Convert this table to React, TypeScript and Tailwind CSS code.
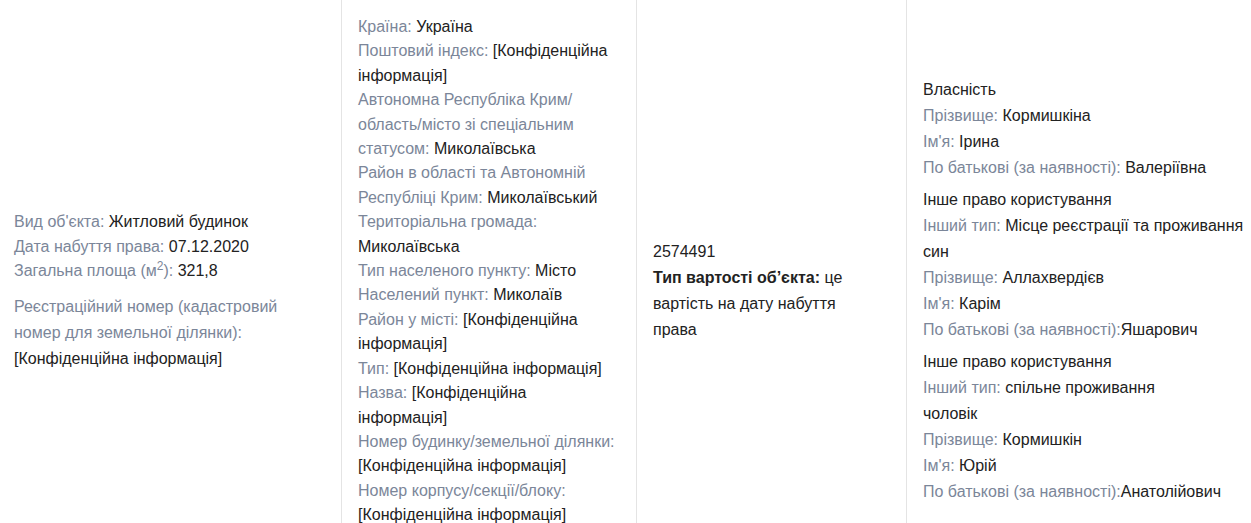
import React from 'react'

type Item = { label?: string; value?: React.ReactNode }

const address: Item[] = [
    { label: 'Країна:', value: 'Україна' },
    { label: 'Поштовий індекс:', value: '[Конфіденційна інформація]' },
    { label: 'Автономна Республіка Крим/ область/місто зі спеціальним статусом:', value: 'Миколаївська' },
    { label: 'Район в області та Автономній Республіці Крим:', value: 'Миколаївський' },
    { label: 'Територіальна громада:', value: 'Миколаївська' },
    { label: 'Тип населеного пункту:', value: 'Місто' },
    { label: 'Населений пункт:', value: 'Миколаїв' },
    { label: 'Район у місті:', value: '[Конфіденційна інформація]' },
    { label: 'Тип:', value: '[Конфіденційна інформація]' },
    { label: 'Назва:', value: '[Конфіденційна інформація]' },
    { label: 'Номер будинку/земельної ділянки:', value: '[Конфіденційна інформація]' },
    { label: 'Номер корпусу/секції/блоку:', value: '[Конфіденційна інформація]' },
    { label: 'Номер квартири:', value: '[Конфіденційна інформація]' },
]

const owners = [
    {
        title: 'Власність',
        rows: [
            { label: 'Прізвище:', value: ' Кормишкіна' },
            { label: "Ім'я:", value: ' Ірина' },
            { label: 'По батькові (за наявності):', value: ' Валеріївна' },
        ],
    },
    {
        title: 'Інше право користування',
        rows: [
            { label: 'Інший тип:', value: ' Місце реєстрації та проживання' },
            { value: 'син' },
            { label: 'Прізвище:', value: ' Аллахвердієв' },
            { label: "Ім'я:", value: ' Карім' },
            { label: 'По батькові (за наявності):', value: 'Яшарович' },
        ],
    },
    {
        title: 'Інше право користування',
        rows: [
            { label: 'Інший тип:', value: ' спільне проживання' },
            { value: 'чоловік' },
            { label: 'Прізвище:', value: ' Кормишкін' },
            { label: "Ім'я:", value: ' Юрій' },
            { label: 'По батькові (за наявності):', value: 'Анатолійович' },
        ],
    },
]

function Label({ children }: { children: React.ReactNode }) {
    return <span className="text-[#7b8699]">{children}</span>
}

export default function App() {
    return (
        <div className="w-full h-[523px] overflow-hidden bg-white text-[16px] text-[#222] [font-family:'Liberation_Sans',Arial,sans-serif]">
            <div className="flex h-[582px]">
                {/* Object */}
                <div className="flex w-[341px] shrink-0 flex-col justify-center pl-[14px] pr-4">
                    <div className="leading-[24.4px]">
                        <div>
                            <Label>Вид об'єкта:</Label> Житловий будинок
                        </div>
                        <div>
                            <Label>Дата набуття права:</Label> 07.12.2020
                        </div>
                        <div>
                            <Label>
                                Загальна площа (м<sup className="text-[12px]">2</sup>):
                            </Label>{' '}
                            321,8
                        </div>
                    </div>
                    <div className="mt-[10px] leading-[26px]">
                        <Label>Реєстраційний номер (кадастровий номер для земельної ділянки):</Label>
                        <br />
                        [Конфіденційна інформація]
                    </div>
                </div>

                {/* Address */}
                <div className="flex w-[295px] shrink-0 flex-col border-l border-[#e4e4e4] pl-4 pr-[20px] pt-[15px] leading-[24.4px]">
                    {address.map((a, i) => (
                        <div key={i}>
                            <Label>{a.label}</Label> {a.value}
                        </div>
                    ))}
                </div>

                {/* Cost */}
                <div className="flex w-[270px] shrink-0 flex-col justify-center border-l border-[#e4e4e4] pl-4 leading-[26px]">
                    <div className="w-[215px]">
                        <div>2574491</div>
                        <div>
                            <b className="font-bold">Тип вартості об’єкта:</b> це вартість на дату набуття права
                        </div>
                    </div>
                </div>

                {/* Owners */}
                <div className="flex min-w-[400px] flex-1 flex-col justify-center gap-[6px] whitespace-nowrap border-l border-[#e4e4e4] pl-4 leading-[26px]">
                    {owners.map((o, i) => (
                        <div key={i}>
                            <div>{o.title}</div>
                            {o.rows.map((r, j) => (
                                <div key={j}>
                                    {r.label && <Label>{r.label}</Label>}
                                    {r.value}
                                </div>
                            ))}
                        </div>
                    ))}
                </div>
            </div>
        </div>
    )
}
